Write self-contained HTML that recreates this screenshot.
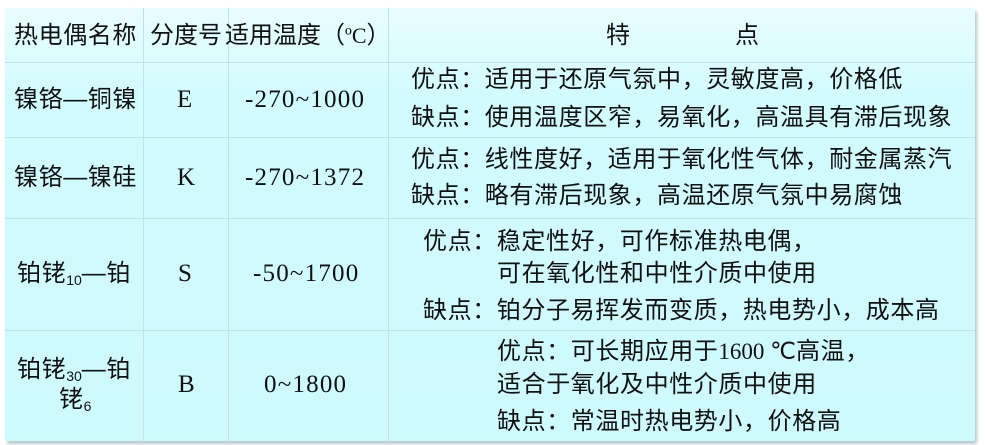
<!DOCTYPE html><html><head><meta charset="utf-8"><style>
body{margin:0;width:985px;height:445px;background:#fff;overflow:hidden;position:relative;font-family:"Liberation Sans","Noto Sans CJK SC",sans-serif;color:#111}
.tb{position:absolute;left:5px;top:8px;width:970px;height:433px;background:linear-gradient(#e9fdff,#d2fbfe 20%,#cef9fd);box-shadow:2px 3px 3px #b8c8cc;border-radius:2px}
.h{position:absolute;left:5px;width:970px;height:1px;background:#bfe3ea}
.v{position:absolute;top:8px;width:1px;height:433px;background:#bfe3ea}
.t{position:absolute;font-size:24px;letter-spacing:0.6px;line-height:30px;white-space:nowrap}
.s{font-family:"Liberation Serif",serif;font-size:25px;letter-spacing:1.2px}
sub{font-size:14px;vertical-align:-4px;letter-spacing:0}
</style></head><body>
<div class="tb"></div>
<div class="h" style="top:62px"></div><div class="h" style="top:137px"></div><div class="h" style="top:218px"></div><div class="h" style="top:330px"></div>
<div class="v" style="left:143px"></div><div class="v" style="left:228px"></div><div class="v" style="left:388px"></div>
<div class="t" style="left:14px;top:21px">热电偶名称</div>
<div class="t" style="left:150px;top:21px;letter-spacing:0">分度号</div>
<div class="t" style="left:225px;top:21px;letter-spacing:0">适用温度（<span class="s" style="font-size:22px;letter-spacing:0">ºC</span>）</div>
<div class="t" style="left:606px;top:21px">特</div><div class="t" style="left:735px;top:21px">点</div>

<div class="t" style="left:14px;top:85px">镍铬—铜镍</div>
<div class="t s" style="left:177px;top:85px">E</div>
<div class="t s" style="left:245px;top:85px">-270~1000</div>
<div class="t" style="left:411px;top:65px">优点：适用于还原气氛中，灵敏度高，价格低</div>
<div class="t" style="left:411px;top:103px">缺点：使用温度区窄，易氧化，高温具有滞后现象</div>

<div class="t" style="left:14px;top:163px">镍铬—镍硅</div>
<div class="t s" style="left:177px;top:163px">K</div>
<div class="t s" style="left:245px;top:163px">-270~1372</div>
<div class="t" style="left:411px;top:145px">优点：线性度好，适用于氧化性气体，耐金属蒸汽</div>
<div class="t" style="left:411px;top:181px">缺点：略有滞后现象，高温还原气氛中易腐蚀</div>

<div class="t" style="left:17px;top:259px">铂铑<sub>10</sub>—铂</div>
<div class="t s" style="left:178px;top:259px">S</div>
<div class="t s" style="left:253px;top:259px">-50~1700</div>
<div class="t" style="left:423px;top:227px">优点：稳定性好，可作标准热电偶，</div>
<div class="t" style="left:497px;top:259px">可在氧化性和中性介质中使用</div>
<div class="t" style="left:423px;top:296px">缺点：铂分子易挥发而变质，热电势小，成本高</div>

<div class="t" style="left:17px;top:355px">铂铑<sub>30</sub>—铂</div>
<div class="t" style="left:59px;top:385px">铑<sub>6</sub></div>
<div class="t s" style="left:178px;top:370px">B</div>
<div class="t s" style="left:264px;top:370px">0~1800</div>
<div class="t" style="left:497px;top:337px">优点：可长期应用于<span class="s" style="font-size:23px;letter-spacing:0">1600 ℃</span>高温，</div>
<div class="t" style="left:497px;top:370px">适合于氧化及中性介质中使用</div>
<div class="t" style="left:497px;top:407px">缺点：常温时热电势小，价格高</div>
</body></html>
